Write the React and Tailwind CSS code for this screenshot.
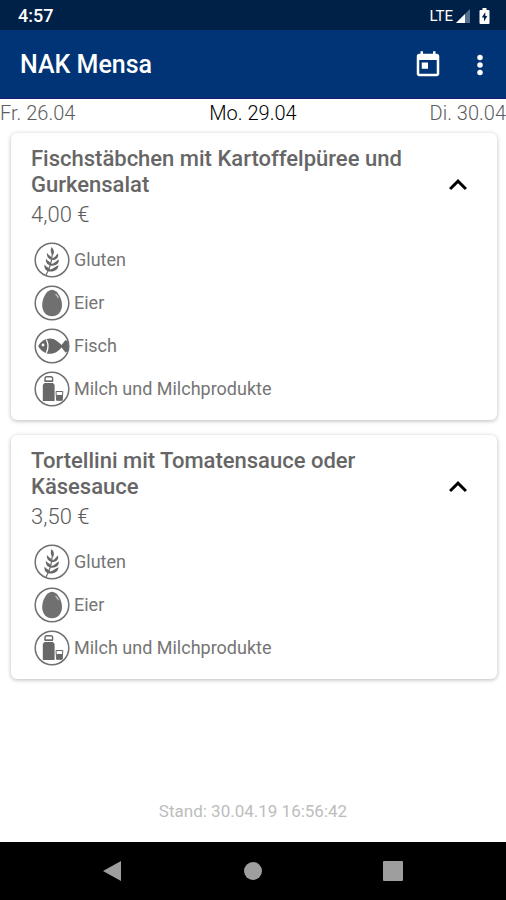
import { useState } from 'react'

const TAGE = [
  { label: 'Fr. 26.04', style: 'text-left text-[#5c5c5c]' },
  { label: 'Mo. 29.04', style: 'text-center text-black' },
  { label: 'Di. 30.04', style: 'text-right text-[#5c5c5c]' },
]

const GERICHTE = [
  {
    name: 'Fischstäbchen mit Kartoffelpüree und Gurkensalat',
    preis: '4,00 €',
    allergene: ['Gluten', 'Eier', 'Fisch', 'Milch und Milchprodukte'],
  },
  {
    name: 'Tortellini mit Tomatensauce oder Käsesauce',
    preis: '3,50 €',
    allergene: ['Gluten', 'Eier', 'Milch und Milchprodukte'],
  },
]

const SYMBOLE = {
  Gluten: (
    <g fill="#686868">
      <path d="M12 33 C15 28 17.500 23 18.300 12" fill="none" stroke="#686868" strokeWidth="1.200" />
      <path d="M17.500 5 C20.200 7.500 20.800 10.500 18.800 13.500 C16.500 11 16.200 8 17.500 5 Z" />
      <path d="M13 10.500 C13.500 13 16 12.800 18.300 16.500 C21 15.500 22.500 12.500 24 11.500 C25 15.500 22.500 18 18.300 18 C14.500 17.500 12.300 15 13 10.500 Z" />
      <path d="M12 16.500 C13 19 15.500 19 17.500 22 C20.500 21.500 22.500 18.500 24.800 17.500 C25.300 21.500 22 24 17.300 23.700 C13.200 23 11.300 20.500 12 16.500 Z" />
      <path d="M10.500 22.500 C12 25 14.500 24.800 16 27.500 C19.500 27 21.500 24 24.500 23.300 C24.500 27.500 20.500 30 15.500 29.500 C11.500 29 10 26.500 10.500 22.500 Z" />
    </g>
  ),
  Eier: (
    <>
      <path d="M18 4.800 C23.500 4.800 28 13.500 28 20 C28 26.800 23.800 31.200 18 31.200 C12.200 31.200 8.200 26.800 8.200 20 C8.200 13.500 12.500 4.800 18 4.800 Z" fill="#707070" />
      <path d="M21.500 9 C23 10.200 23.800 11.500 24.400 13" fill="none" stroke="#c4c4c4" strokeWidth="1.200" />
    </>
  ),
  Fisch: (
    <>
      <path d="M4.200 18 C6.500 13.500 11 10.500 16 10.500 C21 10.500 24.500 14 27.500 17 L31.500 12 L34 13.500 V23 L31.500 24.500 L27.500 19.500 C24.500 23 21 25.800 16 25.800 C11 25.800 6.500 22.500 4.200 18 Z" fill="#686868" />
      <path d="M12.300 11.500 C14.600 16 14.600 20.500 12.300 25" fill="none" stroke="#fff" strokeWidth="1.300" />
      <circle cx="9" cy="17" r="1.400" fill="#fff" />
    </>
  ),
  'Milch und Milchprodukte': (
    <>
      <path d="M11 10 V7.500 Q11 5.700 12.800 5.700 H16.800 Q18.600 5.700 18.600 7.500 V10" fill="none" stroke="#686868" strokeWidth="1.400" />
      <path d="M10.500 9.300 H19 V11 H10.500 Z" fill="#686868" />
      <path d="M10.500 12 H19 L20.600 14 V30 H8.800 V14 Z" fill="#686868" />
      <path d="M22 20.500 H28.800 L28.200 29.300 H22.600 Z" fill="#fff" stroke="#686868" strokeWidth="1" />
      <path d="M22.200 24 H28.600 L28.200 29.300 H22.600 Z" fill="#686868" />
    </>
  ),
}

function Statusleiste() {
  return (
    <div className="h-[30px] bg-[#002147] text-white flex items-center justify-between pt-px pl-[18px] pr-4">
      <span className="text-[18px] leading-5 font-medium">4:57</span>
      <div className="flex items-center">
        <span className="text-[15px] leading-5">LTE</span>
        <svg className="ml-[3px] w-[14px] h-[14px]" viewBox="0 0 14 14">
          <path d="M14 0 V14 H0 Z" fill="#56708f" />
          <path d="M9 5 V14 H0 Z" fill="#fff" />
        </svg>
        <svg className="ml-[9px] w-[11px] h-4" viewBox="0 0 10 16">
          <path d="M3 0 H7 V2 H9 Q10 2 10 3 V15 Q10 16 9 16 H1 Q0 16 0 15 V3 Q0 2 1 2 H3 Z" fill="#fff" />
          <path d="M5.800 4 L2.300 9.500 H4.500 V13.500 L7.800 8 H5.800 Z" fill="#002147" />
        </svg>
      </div>
    </div>
  )
}

function Kopfzeile() {
  return (
    <header className="h-[69px] bg-[#003476] border-b border-[#1a1a6c] text-white flex items-center pt-[2px] pl-5 pr-[11px]">
      <h1 className="flex-1 text-[25px] leading-8 font-medium">NAK Mensa</h1>
      <button type="button" aria-label="Heute" className="mr-[22px]">
        <svg className="size-[30px]" viewBox="0 0 24 24" fill="currentColor">
          <path d="M19 3h-1V1h-2v2H8V1H6v2H5c-1.110 0-1.990.9-1.990 2L3 19c0 1.100.89 2 2 2h14c1.100 0 2-.9 2-2V5c0-1.100-.9-2-2-2zm0 16H5V8h14v11zM7 10h5v5H7z" />
        </svg>
      </button>
      <button type="button" aria-label="Menü">
        <svg className="size-[30px]" viewBox="0 0 24 24" fill="currentColor">
          <circle cx="12" cy="6" r="2.200" />
          <circle cx="12" cy="12" r="2.200" />
          <circle cx="12" cy="18" r="2.200" />
        </svg>
      </button>
    </header>
  )
}

function Allergen({ name }) {
  return (
    <li className="h-[43px] flex items-center gap-1">
      <svg className="size-9" viewBox="0 0 36 36">
        <circle cx="18" cy="18" r="16.800" fill="#fff" stroke="#707070" strokeWidth="1.500" />
        {SYMBOLE[name]}
      </svg>
      <span className="text-[18px] leading-6 text-[#757575]">{name}</span>
    </li>
  )
}

function Gericht({ gericht }) {
  const [offen, setOffen] = useState(true)

  return (
    <article className="bg-white rounded-md shadow-[0_1px_4px_rgba(0,0,0,0.28)] pl-5 pr-[21px] pt-[13px] pb-[10px]">
      <div className="flex items-start">
        <div className="flex-1">
          <h2 className="text-[22px] leading-[26px] font-medium text-[#666]">{gericht.name}</h2>
          <p className="mt-1 text-[22px] leading-[26px] font-light text-[#5c5c5c]">{gericht.preis}</p>
        </div>
        <button type="button" aria-label="Allergene" aria-expanded={offen} onClick={() => setOffen(!offen)} className="mt-[21px] ml-6">
          <svg className={offen ? 'size-9' : 'size-9 rotate-180'} viewBox="0 0 24 24" fill="#000">
            <path d="M12 8l-6 6 1.410 1.410L12 10.830l4.590 4.580L18 14z" />
          </svg>
        </button>
      </div>
      {offen && (
        <ul className="mt-[10px] pl-[3px]">
          {gericht.allergene.map(a => <Allergen key={a} name={a} />)}
        </ul>
      )}
    </article>
  )
}

function Navigationsleiste() {
  return (
    <nav className="h-[58px] bg-black text-[#9e9e9e] flex items-center justify-center gap-[110px]">
      <button type="button" aria-label="Zurück">
        <svg className="size-[30px]" viewBox="0 0 30 30" fill="currentColor">
          <path d="M5 15 L23 5 V25 Z" />
        </svg>
      </button>
      <button type="button" aria-label="Startseite">
        <svg className="size-[30px]" viewBox="0 0 30 30" fill="currentColor">
          <circle cx="15" cy="15" r="9" />
        </svg>
      </button>
      <button type="button" aria-label="Übersicht">
        <svg className="size-[30px]" viewBox="0 0 30 30" fill="currentColor">
          <rect x="5" y="5" width="20" height="20" rx="1" />
        </svg>
      </button>
    </nav>
  )
}

export default function App() {
  return (
    <div className="min-h-screen flex flex-col bg-white font-['Roboto',sans-serif]">
      <Statusleiste />
      <Kopfzeile />
      <div className="grid grid-cols-3 h-[34px] pt-[2px] text-[20px] leading-6 font-light">
        {TAGE.map(t => (
          <button key={t.label} type="button" className={`h-6 ${t.style}`}>{t.label}</button>
        ))}
      </div>
      <main className="flex-1 flex flex-col gap-[15px] pl-[11px] pr-[9px]">
        {GERICHTE.map(g => <Gericht key={g.name} gericht={g} />)}
      </main>
      <footer className="pt-4 pb-[19px] text-center text-[17px] leading-6 text-[#bdbdbd]">
        Stand: 30.04.19 16:56:42
      </footer>
      <Navigationsleiste />
    </div>
  )
}
